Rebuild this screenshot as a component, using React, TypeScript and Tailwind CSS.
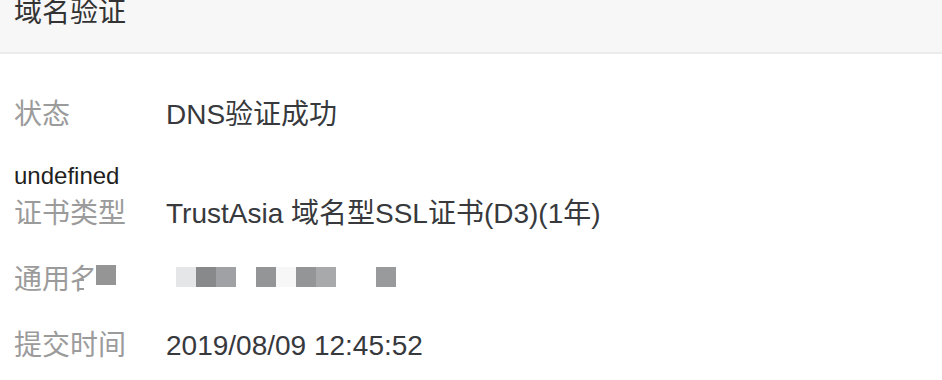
import React from "react";

const font = { fontFamily: '"Liberation Sans", "Noto Sans CJK SC", sans-serif' };

function Row({ label, children, className = "", labelExtra }: { label: string; children?: React.ReactNode; className?: string; labelExtra?: React.ReactNode }) {
  return (
    <div className={`flex items-center text-[28px] leading-[28px] ${className}`}>
      <div className="relative w-[152px] shrink-0 whitespace-nowrap text-[#9b9b9b]">
        {label}
        {labelExtra}
      </div>
      <div className="flex items-center whitespace-nowrap text-[#37393d]">{children}</div>
    </div>
  );
}

export default function App() {
  return (
    <div className="w-[942px] h-[380px] overflow-hidden bg-white" style={font}>
      <div className="h-[54px] bg-[#f7f7f7] border-b-2 border-[#ececec] pl-[14px] overflow-hidden">
        <div className="-mt-[1px] text-[28px] leading-[28px] text-[#333333]">域名验证</div>
      </div>
      <div className="pl-[14px]">
        <Row label="状态" className="mt-[47px]">DNS验证成功</Row>
        <div className="mt-[35px] text-[24px] leading-[24px] text-[#1f1f1f]">undefined</div>
        <Row label="证书类型" className="mt-[12px]">TrustAsia 域名型SSL证书(D3)(1年)</Row>
        <Row
          label="通用名"
          className="mt-[38px]"
          labelExtra={
            <>
              <span className="absolute left-[70px] top-[13px] h-[20px] w-[36px] bg-white" />
              <span className="absolute left-[82px] top-[-1px] h-[20px] w-[20px] bg-[#959595]" />
            </>
          }
        >
          <div className="flex h-[20px] -mt-[6px]">
            <span className="ml-[10px] w-[20px] bg-[#e5e6e8]" />
            <span className="w-[20px] bg-[#88898b]" />
            <span className="w-[20px] bg-[#a0a1a4]" />
            <span className="ml-[20px] w-[20px] bg-[#939597]" />
            <span className="w-[20px] bg-[#f7f7f7]" />
            <span className="w-[20px] bg-[#939597]" />
            <span className="w-[20px] bg-[#a8a9ab]" />
            <span className="ml-[40px] w-[20px] bg-[#999a9c]" />
          </div>
        </Row>
        <Row label="提交时间" className="mt-[38px]">2019/08/09 12:45:52</Row>
      </div>
    </div>
  );
}
